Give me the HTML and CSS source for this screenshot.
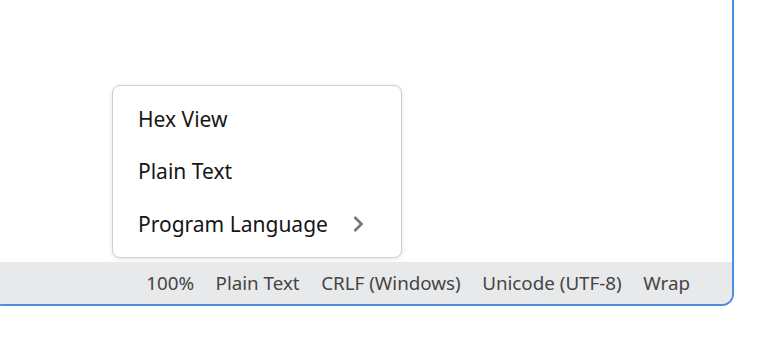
FILE: index.html
```html
<!DOCTYPE html>
<html>
<head>
<meta charset="utf-8">
<link rel="stylesheet" href="styles.css">
</head>
<body>
<div class="window">
  <div class="content"></div>
  <div class="statusbar">
    <span class="item">100%</span>
    <span class="item">Plain Text</span>
    <span class="item">CRLF (Windows)</span>
    <span class="item">Unicode (UTF-8)</span>
    <span class="item">Wrap</span>
  </div>
</div>
<div class="menu">
  <div class="menu-item">Hex View</div>
  <div class="menu-item">Plain Text</div>
  <div class="menu-item has-sub">Program Language
    <svg class="chev" width="12" height="18" viewBox="0 0 12 18"><path d="M2.5 2 L9.5 9 L2.5 16" fill="none" stroke="#777" stroke-width="2.6"/></svg>
  </div>
</div>
</body>
</html>
```
FILE: styles.css
```css
html, body {
  margin: 0;
  padding: 0;
  background: #fff;
  font-family: "Noto Sans", "Open Sans", sans-serif;
}
body {
  width: 771px;
  height: 349px;
  overflow: hidden;
  position: relative;
}
.window {
  box-sizing: border-box;
  width: 744px;
  height: 316px;
  margin-left: -10px;
  margin-top: -10px;
  border: 2px solid #4a90e2;
  border-radius: 12px;
  display: flex;
  flex-direction: column;
  overflow: hidden;
}
.content {
  flex: 1;
  background: #fff;
}
.statusbar {
  height: 42px;
  background: #e8e9ea;
  display: flex;
  align-items: center;
  justify-content: flex-end;
  gap: 21.5px;
  padding-right: 42px;
  color: #454545;
  font-size: 18.8px;
}
.menu {
  position: absolute;
  left: 112px;
  top: 85px;
  width: 290px;
  height: 173px;
  box-sizing: border-box;
  background: #fff;
  border: 1px solid #cfcfcf;
  border-radius: 8px;
  box-shadow: 0 1px 4px rgba(0,0,0,0.12);
  padding: 7px 0 7px;
  display: flex;
  flex-direction: column;
}
.menu-item {
  height: 53px;
  display: flex;
  align-items: center;
  padding-left: 25px;
  font-size: 21px;
  color: #161616;
}
.chev {
  margin-left: 24px;
}
```
